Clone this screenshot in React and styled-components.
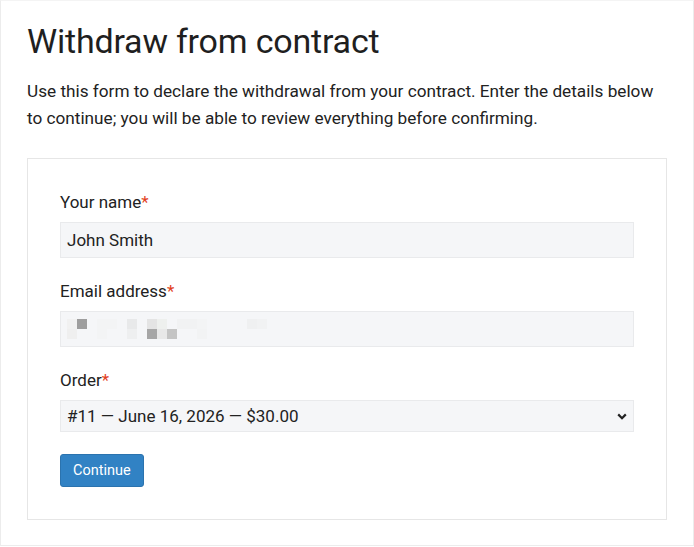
import React from 'react'
import styled, { createGlobalStyle } from 'styled-components'

const GlobalStyle = createGlobalStyle`
  html, body {
    margin: 0;
    padding: 0;
    background: #ffffff;
  }
  body {
    font-family: Roboto, "Liberation Sans", Arial, sans-serif;
    color: #212121;
  }
`

const Page = styled.div`
  box-sizing: border-box;
  width: 694px;
  height: 546px;
  border: 1px solid #ececec;
  border-top-color: #f4f4f4;
  padding: 20px 26px 0 26px;
`

const Title = styled.h1`
  margin: 0;
  font-size: 34px;
  font-weight: 400;
  line-height: 40px;
  letter-spacing: -0.2px;
  color: #1f1f1f;
`

const Intro = styled.p`
  margin: 17px 0 26px;
  font-size: 17.2px;
  line-height: 27px;
  color: #222;
`

const Card = styled.form`
  box-sizing: border-box;
  width: 640px;
  border: 1px solid #e6e6e6;
  padding: 31px 32px 32px 32px;
`

const Field = styled.div`
  display: flex;
  flex-direction: column;
  margin-bottom: 21px;
`

const Label = styled.label`
  font-size: 17px;
  line-height: 24px;
  margin-bottom: 8px;
  color: #222;
`

const Required = styled.span`
  color: #e2401c;
`

const Input = styled.div`
  box-sizing: border-box;
  width: 574px;
  height: ${p => (p.$short ? 32 : 36)}px;
  background: #f5f6f8;
  border: 1px solid #e9eaec;
  padding: 0 6px;
  display: flex;
  align-items: center;
  justify-content: space-between;
  font-size: 17px;
  color: #222;
`

const Chevron = () => (
  <svg width="10" height="7" viewBox="0 0 10 7">
    <path d="M1.2 1.4 L5 5.2 L8.8 1.4" fill="none" stroke="#222" strokeWidth="2.2" />
  </svg>
)

const blocks = [
  [0, 0, '#f1f1f1'], [10, 0, '#9e9e9e'], [30, 0, '#f3f4f5'], [40, 0, '#f3f4f5'],
  [60, 0, '#e8e9ea'], [80, 0, '#e4e4e4'], [90, 0, '#eef0ee'], [110, 0, '#f1f2f3'],
  [120, 0, '#f1f2f3'], [130, 0, '#f3f4f5'], [180, 0, '#eff0f1'], [190, 0, '#f1f2f3'],
  [0, 10, '#efefef'], [30, 10, '#f3f4f5'], [60, 10, '#eeeff0'], [80, 10, '#a6a6a6'],
  [90, 10, '#e8e8e8'], [100, 10, '#c4c4c4'], [130, 10, '#f2f3f4'],
]

const Redacted = () => (
  <svg width="210" height="20" viewBox="0 0 210 20">
    {blocks.map(([x, y, c]) => (
      <rect key={`${x}-${y}`} x={x} y={y} width="10" height="10" fill={c} />
    ))}
  </svg>
)

const Button = styled.button`
  box-sizing: border-box;
  height: 33px;
  margin-top: 1px;
  padding: 0 12px;
  background: #3182c4;
  border: 1px solid #2b73ae;
  border-radius: 3px;
  color: #ffffff;
  font-family: Roboto, "Liberation Sans", Arial, sans-serif;
  font-size: 14.5px;
  cursor: pointer;
`

const App = () => (
  <>
    <GlobalStyle />
    <Page>
      <Title>Withdraw from contract</Title>
      <Intro>
        Use this form to declare the withdrawal from your contract. Enter the details below
        to continue; you will be able to review everything before confirming.
      </Intro>
      <Card onSubmit={e => e.preventDefault()}>
        <Field>
          <Label>
            Your name<Required>*</Required>
          </Label>
          <Input>John Smith</Input>
        </Field>
        <Field>
          <Label>
            Email address<Required>*</Required>
          </Label>
          <Input>
            <Redacted />
          </Input>
        </Field>
        <Field>
          <Label>
            Order<Required>*</Required>
          </Label>
          <Input $short>
            <span>#11 — June 16, 2026 — $30.00</span>
            <Chevron />
          </Input>
        </Field>
        <Button type="submit">Continue</Button>
      </Card>
    </Page>
  </>
)

export default App
